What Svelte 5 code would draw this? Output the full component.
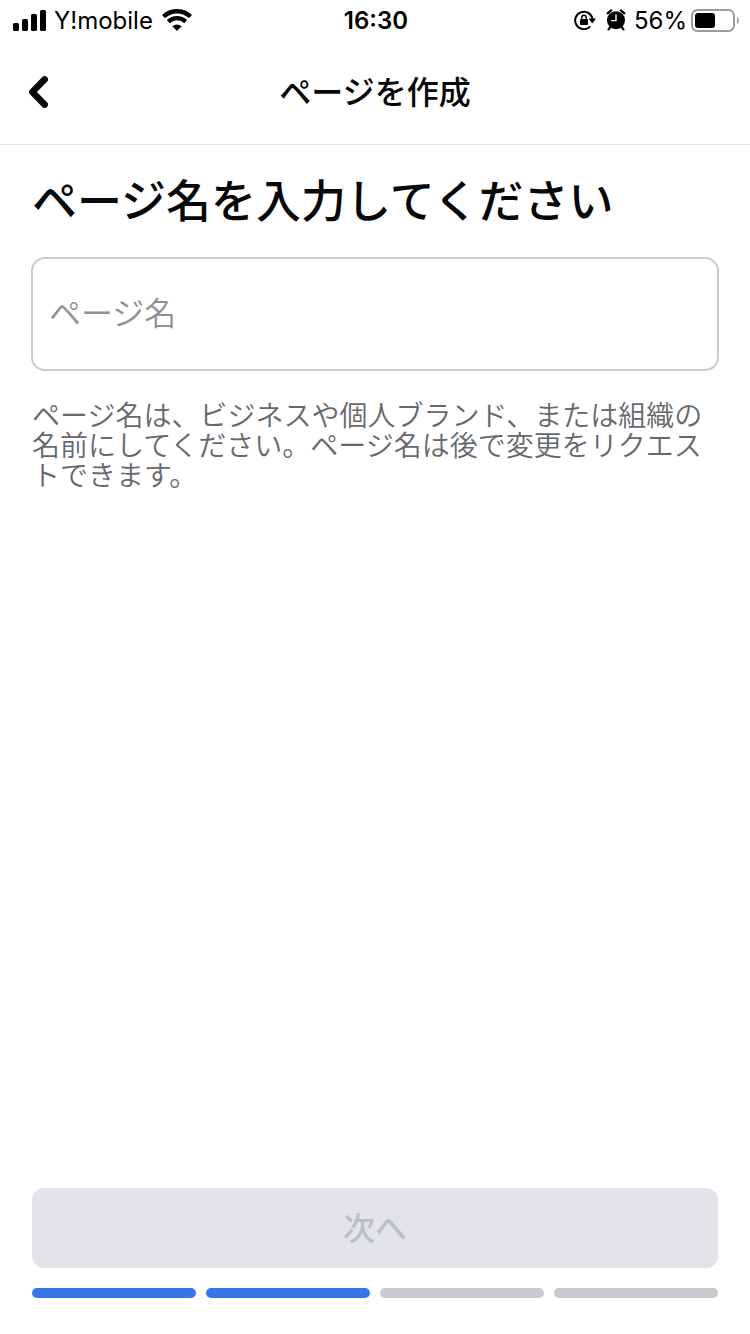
<script lang="ts">
	const TOTAL_STEPS = 4;
	const CURRENT_STEP = 2;

	const steps = Array.from({ length: TOTAL_STEPS }, (_, i) => i < CURRENT_STEP);

	let pageName = $state("");
	const canContinue = $derived(pageName.trim().length > 0);
</script>

<div class="screen">
	<div class="status-bar">
		<div class="status-side">
			<svg width="33" height="21" viewBox="0 0 33 21" aria-hidden="true">
				<rect x="0" y="13" width="6" height="8" rx="1.6" />
				<rect x="9" y="9" width="6" height="12" rx="1.6" />
				<rect x="18" y="4" width="6" height="17" rx="1.6" />
				<rect x="27" y="0" width="6" height="21" rx="1.6" />
			</svg>
			<span class="carrier">Y!mobile</span>
			<svg width="30" height="22" viewBox="0 0 30 22" aria-hidden="true">
				<g fill="none" stroke="#000">
					<path d="M1.5 7.5A19.8 19.8 0 0 1 28.5 7.5" stroke-width="4.4" />
					<path d="M6.3 12.6A12.8 12.8 0 0 1 23.7 12.6" stroke-width="4.2" />
				</g>
				<path d="M10.4 17.2A6.8 6.8 0 0 1 19.6 17.2L15 22Z" />
			</svg>
		</div>

		<span class="clock">16:30</span>

		<div class="status-side status-right">
			<svg width="22" height="20" viewBox="0 0 22 20" aria-hidden="true">
				<path
					d="M15.6 17A8.7 8.7 0 1 1 18.4 8.6"
					fill="none"
					stroke="#000"
					stroke-width="2"
					stroke-linecap="round"
				/>
				<path d="M14.6 8.6H22L18.3 13.4Z" />
				<rect x="6" y="9" width="8" height="6" rx="0.8" />
				<path d="M7.8 9.5V7.4A2.2 2.2 0 0 1 12.2 7.4V9.5" fill="none" stroke="#000" stroke-width="1.4" />
			</svg>
			<svg class="alarm" width="20" height="22" viewBox="0 0 20 22" aria-hidden="true">
				<circle cx="10" cy="11.2" r="9" />
				<path
					d="M1.6 4.4L5.2 1.4M18.4 4.4L14.8 1.4M4.4 18L2.6 20.4M15.6 18L17.4 20.4"
					stroke="#000"
					stroke-width="2.2"
					stroke-linecap="round"
				/>
				<path d="M10 6V11.6H5.6" fill="none" stroke="#fff" stroke-width="1.4" stroke-linecap="round" />
			</svg>
			<span class="percent">56%</span>
			<svg width="48" height="23" viewBox="0 0 48 23" aria-hidden="true">
				<rect x="1" y="1" width="42" height="21" rx="5.5" fill="none" stroke="#9c9c9c" stroke-width="2" />
				<rect x="4" y="4" width="20" height="15" rx="3" />
				<path d="M46 8C48.6 9 48.6 14 46 15Z" fill="#9c9c9c" />
			</svg>
		</div>
	</div>

	<header>
		<button class="back" type="button" aria-label="戻る">
			<svg width="20" height="32" viewBox="0 0 20 32" aria-hidden="true">
				<path
					d="M16.7 3.4L4.3 16L16.7 28.6"
					fill="none"
					stroke="#080809"
					stroke-width="6.6"
					stroke-linecap="round"
					stroke-linejoin="round"
				/>
			</svg>
		</button>
		<h1>ページを作成</h1>
	</header>

	<main>
		<h2><label for="page-name">ページ名を入力してください</label></h2>
		<input
			id="page-name"
			type="text"
			placeholder="ページ名"
			aria-describedby="page-name-hint"
			bind:value={pageName}
		/>
		<p id="page-name-hint">
			ページ名は、ビジネスや個人ブランド、または組織の名前にしてください。ページ名は後で変更をリクエストできます。
		</p>
	</main>

	<footer>
		<button class="next" type="button" disabled={!canContinue}>次へ</button>
		<div class="steps">
			{#each steps as done}
				<span class="step" class:done></span>
			{/each}
		</div>
	</footer>
</div>

<style>
	:global(body) {
		background: #fff;
	}

	.screen {
		min-height: 100vh;
		display: flex;
		flex-direction: column;
		color: #080809;
		font-family: "Noto Sans CJK JP", sans-serif;
	}

	svg {
		display: block;
		flex: none;
	}

	.status-bar {
		height: 40px;
		padding: 0 11px 0 13px;
		display: grid;
		grid-template-columns: 1fr auto 1fr;
		align-items: center;
		color: #000;
		font-family: Inter, "Liberation Sans", sans-serif;
		font-size: 24px;
		line-height: 36px;
	}

	.status-bar span {
		padding-top: 2px;
	}

	.status-side {
		display: flex;
		align-items: center;
	}

	.status-right {
		justify-content: flex-end;
	}

	.carrier {
		margin: 0 9px 0 8px;
	}

	.clock {
		font-weight: 600;
	}

	.alarm {
		margin: 0 8px 0 10px;
	}

	.percent {
		margin-right: 4px;
	}

	header {
		height: 104px;
		padding: 0 16px;
		display: grid;
		grid-template-columns: 1fr auto 1fr;
		align-items: center;
		border-bottom: 1px solid #e2e2e4;
	}

	button {
		border: 0;
		font-family: inherit;
	}

	.back {
		justify-self: start;
		padding: 12px;
		background: none;
		cursor: pointer;
	}

	h1 {
		margin: 0;
		padding-bottom: 4px;
		font-size: 32px;
		font-weight: 500;
		line-height: 40px;
	}

	main {
		flex: 1;
		padding: 26px 31px;
	}

	h2 {
		margin: 0 0 30px;
		padding: 0 1px;
		font-size: 45px;
		font-weight: 500;
		line-height: 56px;
	}

	input {
		box-sizing: border-box;
		width: 100%;
		height: 114px;
		padding: 0 16px 6px;
		display: block;
		border: 2px solid #cbccd1;
		border-radius: 14px;
		background: #fff;
		color: #080809;
		font-family: inherit;
		font-size: 32px;
	}

	input::placeholder {
		color: #8e9196;
		font-weight: 350;
		opacity: 1;
	}

	p {
		margin: 28px 0 0;
		padding: 0 1px;
		color: #65686c;
		font-size: 28px;
		font-weight: 350;
		line-height: 30px;
	}

	footer {
		padding: 0 32px 36px;
	}

	.next {
		width: 100%;
		height: 80px;
		padding: 0 0 4px;
		border-radius: 12px;
		background: #1b74e4;
		color: #fff;
		font-size: 32px;
		font-weight: 500;
	}

	.next:disabled {
		background: #e3e4e9;
		color: #bcc0c4;
	}

	.steps {
		margin-top: 20px;
		display: flex;
		gap: 10px;
	}

	.step {
		flex: 1;
		height: 10px;
		border-radius: 5px;
		background: #c9cad0;
	}

	.step.done {
		background: #3876e8;
	}
</style>
